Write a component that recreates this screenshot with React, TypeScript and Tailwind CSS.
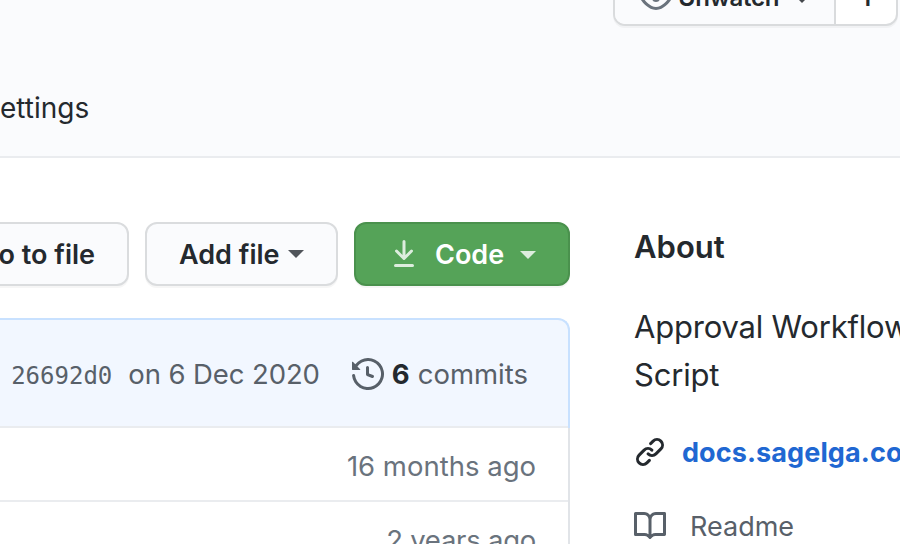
import type { ReactNode } from "react";

const paths = {
  eye: "M1.679 7.932c.412-.621 1.242-1.75 2.366-2.717C5.175 4.242 6.527 3.5 8 3.5c1.473 0 2.824.742 3.955 1.715 1.124.967 1.954 2.096 2.366 2.717a.119.119 0 010 .136c-.412.621-1.242 1.75-2.366 2.717C10.825 11.758 9.473 12.5 8 12.5c-1.473 0-2.824-.742-3.955-1.715C2.92 9.818 2.09 8.69 1.679 8.068a.119.119 0 010-.136zM8 2c-1.981 0-3.67.992-4.933 2.078C1.797 5.169.88 6.423.43 7.1a1.619 1.619 0 000 1.798c.45.678 1.367 1.932 2.637 3.024C4.329 13.008 6.019 14 8 14c1.981 0 3.67-.992 4.933-2.078 1.27-1.091 2.187-2.345 2.637-3.023a1.619 1.619 0 000-1.798c-.45-.678-1.367-1.932-2.637-3.023C11.671 2.992 9.981 2 8 2zm0 8a2 2 0 100-4 2 2 0 000 4z",
  download:
    "M7.47 10.78a.75.75 0 001.06 0l3.75-3.75a.75.75 0 00-1.06-1.06L8.75 8.44V1.75a.75.75 0 00-1.5 0v6.69L4.78 5.97a.75.75 0 00-1.06 1.06l3.75 3.75zM3.75 13a.75.75 0 000 1.5h8.5a.75.75 0 000-1.5h-8.5z",
  history:
    "M1.643 3.143L.427 1.927A.25.25 0 000 2.104V5.75c0 .138.112.25.25.25h3.646a.25.25 0 00.177-.427L2.715 4.215a6.5 6.5 0 11-1.18 4.458.75.75 0 10-1.493.154 8.001 8.001 0 101.6-5.684zM7.75 4a.75.75 0 01.75.75v2.992l2.028.812a.75.75 0 01-.557 1.392l-2.5-1A.75.75 0 017 8.25v-3.5A.75.75 0 017.75 4z",
  link: "M7.775 3.275a.75.75 0 001.06 1.06l1.25-1.25a2 2 0 112.83 2.83l-2.5 2.5a2 2 0 01-2.83 0 .75.75 0 00-1.06 1.06 3.5 3.5 0 004.95 0l2.5-2.5a3.5 3.5 0 00-4.95-4.95l-1.25 1.25zm-4.69 9.64a2 2 0 010-2.83l2.5-2.5a2 2 0 012.83 0 .75.75 0 001.06-1.06 3.5 3.5 0 00-4.95 0l-2.5 2.5a3.5 3.5 0 004.95 4.95l1.25-1.25a.75.75 0 00-1.06-1.06l-1.25 1.25a2 2 0 01-2.83 0z",
  book: "M0 1.75A.75.75 0 01.75 1h4.253c1.227 0 2.317.59 3 1.501A3.744 3.744 0 0111.006 1h4.245a.75.75 0 01.75.75v10.5a.75.75 0 01-.75.75h-4.507a2.25 2.25 0 00-1.591.659l-.622.621a.75.75 0 01-1.06 0l-.622-.621A2.25 2.25 0 005.258 13H.75a.75.75 0 01-.75-.75V1.75zm8.755 3a2.25 2.25 0 012.25-2.25H14.5v9h-3.757c-.71 0-1.4.201-1.992.572l.004-7.322zm-1.504 7.324l.004-5.073-.002-2.253A2.25 2.25 0 005.003 2.5H1.5v9h3.757a3.75 3.75 0 011.994.574z",
};

function Icon({ name, className = "" }: { name: keyof typeof paths; className?: string }) {
  return (
    <svg viewBox="0 0 16 16" className={`size-8 shrink-0 ${className}`} fill="currentColor" aria-hidden="true">
      <path fillRule="evenodd" d={paths[name]} />
    </svg>
  );
}

function Caret({ className = "" }: { className?: string }) {
  return (
    <span
      className={`size-0 shrink-0 border-x-8 border-t-8 border-x-transparent border-t-current ${className}`}
    />
  );
}

function Button({ children, className }: { children: ReactNode; className: string }) {
  return (
    <button
      type="button"
      className={`flex h-16 shrink-0 items-center rounded-xl border-2 text-[27px] leading-10 font-semibold shadow-[0_2px_0_rgba(27,31,35,0.04)] ${className}`}
    >
      {children}
    </button>
  );
}

function FileRow({ age, className = "" }: { age: string; className?: string }) {
  return (
    <div className="flex h-[74px] items-center justify-end border-b-2 border-[#eaecef] pt-[6px] pr-8 text-[27.5px] text-[#6a737d]">
      <span className={className}>{age}</span>
    </div>
  );
}

export default function App() {
  return (
    <div className="flex h-[544px] w-[900px] flex-col overflow-hidden bg-white font-['Inter',sans-serif] whitespace-nowrap text-[#24292e]">
      <header className="flex h-[158px] shrink-0 flex-col justify-between border-b-2 border-[#eaecef] bg-[#fafbfd]">
        <div className="-mt-[30px] ml-[613px] flex h-14 w-[285px] rounded-xl border-2 border-[#d9dbdd] bg-white text-2xl font-semibold shadow-[0_2px_0_rgba(27,31,35,0.04)]">
          <div className="flex w-[221px] items-center rounded-l-[10px] border-r-2 border-[#d9dbdd] bg-[#fafbfd] pl-[25px]">
            <Icon name="eye" className="text-[#6a737d]" />
            <span className="ml-[6px] tracking-[-0.3px]">Unwatch</span>
            <Caret className="mt-[2px] ml-[15px] text-[#44484d]" />
          </div>
          <div className="flex flex-1 items-center justify-center">1</div>
        </div>
        <nav className="pb-[28px] text-[28px] leading-10">ettings</nav>
      </header>

      <main className="flex min-h-0 flex-1">
        <section className="flex w-[570px] shrink-0 flex-col pt-16">
          <div className="flex justify-end gap-4">
            <Button className="w-[193px] justify-end border-[#dadcde] bg-[#fafbfd] pr-8">
              <span className="pt-0.5">Go to file</span>
            </Button>
            <Button className="w-[193px] border-[#dadcde] bg-[#fafbfd] pl-8">
              <span className="pt-0.5">Add file</span>
              <Caret className="ml-2 text-[#50545a]" />
            </Button>
            <Button className="w-[216px] border-[#4a914d] bg-[#55a358] pl-8 text-white">
              <Icon name="download" className="text-white/80" />
              <span className="ml-[15px] pt-0.5">Code</span>
              <Caret className="mt-0.5 ml-4 text-white/80" />
            </Button>
          </div>

          <div className="mt-8">
            <div className="flex h-[110px] items-center justify-end rounded-tr-xl border-t-2 border-r-2 border-[#c8e1ff] bg-[#f2f7ff] pr-10 text-[27.5px] text-[#586069] shadow-[inset_0_-2px_0_#eaecef]">
              <span className="pt-[3px] font-['DejaVu_Sans_Mono',monospace] text-2xl">26692d0</span>
              <span className="ml-4 pt-0.5 tracking-[-0.1px]">on 6 Dec 2020</span>
              <Icon name="history" className="ml-8" />
              <strong className="ml-2 pt-0.5 font-bold text-[#24292e]">6</strong>
              <span className="ml-2 pt-0.5">commits</span>
            </div>
            <div className="border-r-2 border-[#e1e4e8]">
              <FileRow age="16 months ago" />
              <FileRow age="2 years ago" className="tracking-[-0.25px]" />
            </div>
          </div>
        </section>

        <aside className="ml-16 w-[266px] shrink-0 overflow-hidden pt-[65px]">
          <h2 className="text-[31px] leading-[48px] font-semibold">About</h2>
          <p className="mt-8 text-[31px] leading-[48px] tracking-[-0.2px]">
            Approval Workflow
            <br />
            Script
          </p>
          <a className="mt-[21px] flex h-16 items-center text-[27px] font-bold tracking-[0.1px] text-[#2067d2]">
            <Icon name="link" className="text-[#24292e]" />
            <span className="ml-4 pt-0.5">docs.sagelga.com</span>
          </a>
          <div className="mt-2.5 flex h-16 items-center text-[27px] text-[#586069]">
            <Icon name="book" />
            <span className="ml-6 pt-0.5">Readme</span>
          </div>
        </aside>
      </main>
    </div>
  );
}
